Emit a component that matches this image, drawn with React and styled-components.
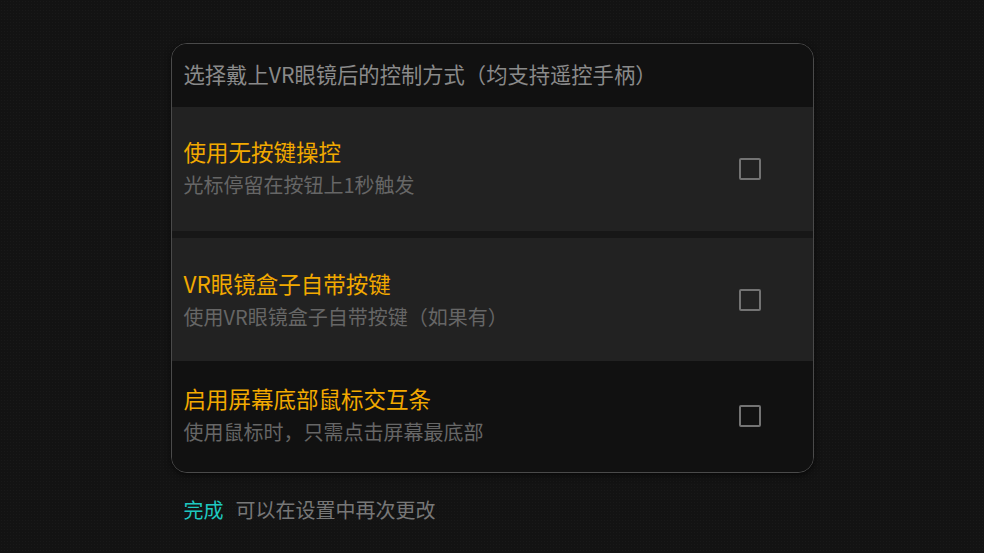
import React from "react";
import styled, { createGlobalStyle } from "styled-components";

const GlobalStyle = createGlobalStyle`
  html, body {
    margin: 0;
    height: 100%;
    background-color: #131313;
    background-image: radial-gradient(rgba(255,255,255,0.025) 1px, transparent 1px);
    background-size: 3px 3px;
    font-family: "Noto Sans CJK SC", "Noto Sans", sans-serif;
  }
  #root { height: 100%; }
`;

const Page = styled.div`
  display: flex;
  flex-direction: column;
  align-items: center;
  padding-top: 43px;
`;

const Wrapper = styled.div`
  width: 643px;
`;

const Card = styled.div`
  border: 1px solid #4a4a4a;
  border-radius: 16px;
  overflow: hidden;
  background: #111111;
  box-shadow: 0 2px 6px rgba(0,0,0,0.6);
`;

const Header = styled.div`
  height: 63px;
  box-sizing: border-box;
  display: flex;
  align-items: center;
  padding: 0 12px 4px;
  font-size: 21.3px;
  color: #8a8a8a;
  background: #111111;
`;

const Row = styled.div`
  height: ${(p) => p.h}px;
  display: flex;
  align-items: center;
  justify-content: space-between;
  padding: 0 52px 0 12px;
  background: ${(p) => (p.light ? "#222222" : "#111111")};
  border-bottom: ${(p) => (p.sep ? "7px solid #171717" : "none")};
`;

const Texts = styled.div`
  display: flex;
  flex-direction: column;
  gap: 6px;
  margin-top: ${(p) => p.shift || 0}px;
`;

const Title = styled.div`
  font-size: 22.5px;
  line-height: 28px;
  color: #f2a900;
`;

const Sub = styled.div`
  font-size: 20px;
  line-height: 28px;
  color: #666666;
`;

const Box = styled.div`
  width: 18px;
  height: 18px;
  border: 2px solid #737373;
  border-radius: 2px;
  margin-top: ${(p) => p.shift || 0}px;
`;

const Footer = styled.div`
  margin-top: 24px;
  padding-left: 13px;
  display: flex;
  gap: 12px;
  font-size: 20px;
  line-height: 26px;
`;

const Done = styled.span`
  color: #1ec8c0;
`;

const Hint = styled.span`
  color: #777777;
`;

const rows = [
  { title: "使用无按键操控", sub: "光标停留在按钮上1秒触发", h: 124, light: true, sep: true, shift: -2 },
  { title: "VR眼镜盒子自带按键", sub: "使用VR眼镜盒子自带按键（如果有）", h: 123, light: true, shift: 0 },
  { title: "启用屏幕底部鼠标交互条", sub: "使用鼠标时，只需点击屏幕最底部", h: 111, shift: -3, boxShift: -2 },
];

export default function App() {
  return (
    <Page>
      <GlobalStyle />
      <Wrapper>
        <Card>
          <Header>选择戴上VR眼镜后的控制方式（均支持遥控手柄）</Header>
          {rows.map((r) => (
            <Row key={r.title} h={r.h} light={r.light} sep={r.sep}>
              <Texts shift={r.shift}>
                <Title>{r.title}</Title>
                <Sub>{r.sub}</Sub>
              </Texts>
              <Box shift={r.boxShift} />
            </Row>
          ))}
        </Card>
        <Footer>
          <Done>完成</Done>
          <Hint>可以在设置中再次更改</Hint>
        </Footer>
      </Wrapper>
    </Page>
  );
}
